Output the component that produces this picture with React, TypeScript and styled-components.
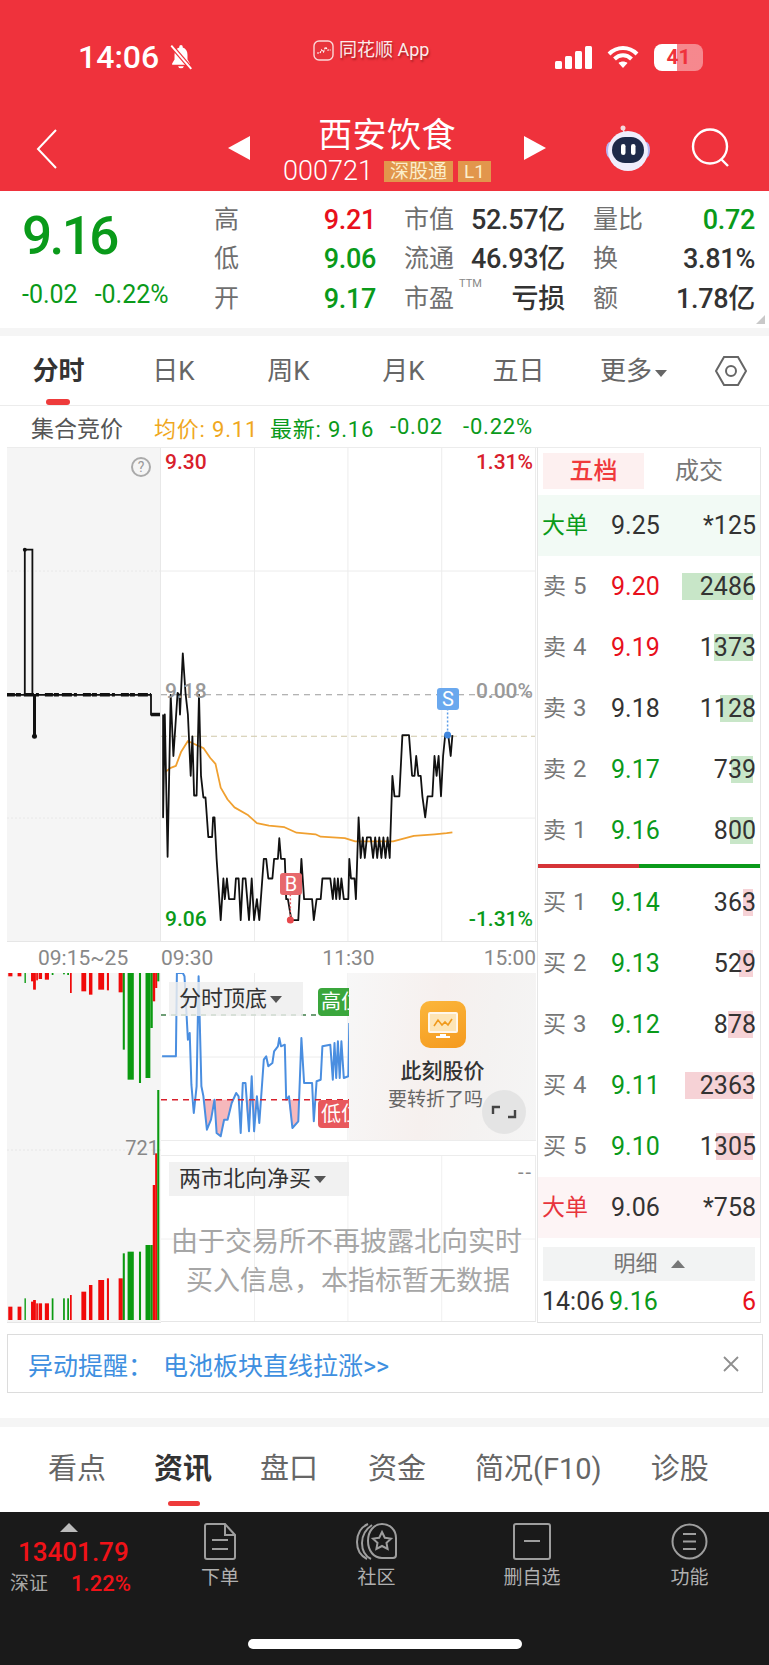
import React from "react";
import styled, { createGlobalStyle } from "styled-components";

const Global = createGlobalStyle`
  html, body { margin: 0; padding: 0; background: #fff; }
  body { font-family: Roboto, "Noto Sans CJK SC", sans-serif; width: 769px; }
  * { box-sizing: border-box; }
`;

const GREEN = "#0a9a1a";
const RED = "#e8101c";

const Page = styled.div`
  width: 769px;
  height: 1665px;
  overflow: hidden;
  display: flex;
  flex-direction: column;
  background: #fff;
`;

/* ---------- header ---------- */
const Header = styled.header`
  height: 191px;
  background: #ef323c;
  color: #fff;
  display: flex;
  flex-direction: column;
`;
const StatusBar = styled.div`
  height: 105px;
  position: relative;
  padding: 42px 66px 0 78px;
  display: flex;
  justify-content: space-between;
  align-items: flex-start;
`;
const TimeGroup = styled.div`
  display: flex;
  align-items: center;
  gap: 9px;
  height: 30px;
`;
const Clock = styled.span`
  font-family: Roboto, sans-serif;
  font-weight: 500;
  font-size: 32px;
  line-height: 30px;
`;
const AppTag = styled.div`
  position: absolute;
  left: 313px;
  top: 37px;
  display: flex;
  align-items: center;
  gap: 5px;
  font-size: 18px;
  line-height: 26px;
  color: rgba(255, 255, 255, 0.92);
  text-shadow: 1px 2px 2px rgba(120, 20, 20, 0.6);
`;
const StatusIcons = styled.div`
  display: flex;
  align-items: center;
  gap: 15px;
  height: 28px;
  margin-top: 1px;
`;
const Battery = styled.div`
  width: 49px;
  height: 27px;
  border-radius: 8px;
  background: linear-gradient(90deg, #fff 0 47%, rgba(255, 255, 255, 0.42) 47%);
  color: #ef323c;
  font-size: 21px;
  font-weight: 700;
  line-height: 27px;
  text-align: center;
`;
const Nav = styled.div`
  flex: 1;
  display: grid;
  grid-template-columns: 228px 22px 274px 22px 1fr;
  align-items: center;
`;
const BackCell = styled.div`
  padding: 2px 0 0 36px;
  display: flex;
  align-items: center;
`;
const TitleBlock = styled.div`
  display: flex;
  flex-direction: column;
  align-items: center;
`;
const Title = styled.div`
  font-size: 34px;
  line-height: 44px;
  letter-spacing: 0.4px;
`;
const CodeLine = styled.div`
  display: flex;
  align-items: center;
  gap: 5px;
  margin-top: 2px;
`;
const Code = styled.span`
  font-size: 27px;
  line-height: 24px;
  font-weight: 300;
  margin-right: 6px;
`;
const Tag = styled.span`
  height: 21px;
  padding: 0 6px;
  background: #e2964c;
  color: #fbeecb;
  font-size: 19px;
  line-height: 21px;
`;
const NavRight = styled.div`
  display: flex;
  align-items: center;
  padding-left: 58px;
  gap: 39px;
`;

/* ---------- quote ---------- */
const Quote = styled.section`
  position: relative;
  height: 137px;
  padding: 0 0 0 22px;
  display: flex;
`;
const PriceBlock = styled.div`
  width: 192px;
  display: flex;
  flex-direction: column;
`;
const BigPrice = styled.div`
  color: ${GREEN};
  font-size: 53px;
  font-weight: 500;
  line-height: 60px;
  letter-spacing: -2.6px;
  margin-top: 15px;
`;
const Change = styled.div`
  margin-top: 14px;
  display: flex;
  gap: 17px;
  color: ${GREEN};
  font-size: 25px;
  line-height: 30px;
`;
const QuoteGrid = styled.div`
  display: grid;
  grid-template-columns: 162px 161px 162px;
  column-gap: 28px;
  grid-auto-rows: 39.5px;
  padding-top: 9px;
`;
const Cell = styled.div`
  display: flex;
  justify-content: space-between;
  align-items: center;
  position: relative;
`;
const Label = styled.span`
  color: #6f6f6f;
  font-size: 25px;
  line-height: 30px;
`;
const Value = styled.span<{ $c?: string }>`
  color: ${(p) => p.$c || "#333"};
  font-size: 27px;
  font-weight: 500;
  line-height: 30px;
  letter-spacing: -0.3px;
`;
const Ttm = styled.sup`
  position: absolute;
  left: 55px;
  top: -1px;
  font-size: 11px;
  line-height: 12px;
  color: #888;
`;
const Corner = styled.div`
  position: absolute;
  right: 4px;
  bottom: 4px;
  width: 0;
  height: 0;
  border-left: 9px solid transparent;
  border-bottom: 9px solid #c9c9c9;
`;
const Band = styled.div<{ $h: number }>`
  height: ${(p) => p.$h}px;
  background: #f5f5f5;
  flex: none;
`;

/* ---------- period tabs ---------- */
const PeriodTabs = styled.nav`
  height: 70px;
  border-bottom: 1px solid #ececec;
  display: flex;
  padding-left: 1px;
  flex: none;
`;
const PeriodTab = styled.div<{ $on?: boolean }>`
  position: relative;
  width: 115px;
  text-align: center;
  line-height: 70px;
  font-size: 26px;
  font-weight: ${(p) => (p.$on ? 700 : 400)};
  color: ${(p) => (p.$on ? "#333" : "#666")};
  &::after {
    content: "";
    display: ${(p) => (p.$on ? "block" : "none")};
    position: absolute;
    left: 45px;
    bottom: 0;
    width: 24px;
    height: 6px;
    border-radius: 3px;
    background: #ee3b3b;
  }
`;
const Caret = styled.i<{ $c?: string; $s?: number }>`
  display: inline-block;
  width: 0;
  height: 0;
  border-left: ${(p) => p.$s || 6}px solid transparent;
  border-right: ${(p) => p.$s || 6}px solid transparent;
  border-top: ${(p) => (p.$s || 6) + 1}px solid ${(p) => p.$c || "#666"};
  margin-left: 3px;
  vertical-align: 3px;
`;
const HexWrap = styled.div`
  margin-left: 23px;
  display: flex;
  align-items: center;
`;

/* ---------- info line ---------- */
const InfoLine = styled.div`
  height: 41px;
  padding-left: 31px;
  display: flex;
  align-items: center;
  font-size: 22px;
  flex: none;
`;
const InfoTitle = styled.span`
  color: #555;
  font-size: 23px;
  width: 123px;
`;
const InfoText = styled.span<{ $c: string; $w: number }>`
  color: ${(p) => p.$c};
  width: ${(p) => p.$w}px;
  letter-spacing: 0.8px;
  white-space: nowrap;
`;

/* ---------- main ---------- */
const Main = styled.div`
  height: 876px;
  flex: none;
  padding-left: 7px;
  display: grid;
  grid-template-columns: 530px 224px;
`;
const LeftCol = styled.div`
  display: flex;
  flex-direction: column;
`;
const PricePanes = styled.div`
  height: 495px;
  display: grid;
  grid-template-columns: 154px 375px;
  border-top: 1px solid #ececec;
  border-bottom: 1px solid #e6e6e6;
`;
const GrayPane = styled.div`
  position: relative;
  background: #f5f5f5;
  border-right: 1px solid #e8e8e8;
`;
const WhitePane = styled.div`
  position: relative;
  background: #fff;
  border-right: 1px solid #ececec;
`;
const ChartSvg = styled.svg`
  display: block;
  position: absolute;
  left: 0;
  top: 0;
`;
const Help = styled.div`
  position: absolute;
  left: 124px;
  top: 9px;
  width: 20px;
  height: 20px;
  border: 2px solid #aaa;
  border-radius: 50%;
  color: #999;
  font-size: 14px;
  line-height: 16px;
  text-align: center;
`;
const AxisLabel = styled.span<{ $c: string; $top: number; $left?: number; $right?: number }>`
  position: absolute;
  top: ${(p) => p.$top}px;
  ${(p) => (p.$left !== undefined ? `left:${p.$left}px;` : "")}
  ${(p) => (p.$right !== undefined ? `right:${p.$right}px;` : "")}
  color: ${(p) => p.$c};
  font-size: 21px;
  font-weight: 500;
  line-height: 24px;
`;
const TimeAxis = styled.div`
  height: 31px;
  display: grid;
  grid-template-columns: 154px 1fr;
  align-items: center;
  color: #888;
  font-size: 21px;
`;
const AuctionTime = styled.span`
  padding-left: 31px;
`;
const SessionTimes = styled.div`
  display: flex;
  justify-content: space-between;
  padding-right: 1px;
`;
const LowerRow = styled.div`
  flex: 1;
  display: grid;
  grid-template-columns: 154px 375px;
`;
const VolPane = styled.div`
  position: relative;
  background: #f5f5f5;
  border-bottom: 1px solid #e6e6e6;
`;
const VolLabel = styled.span`
  position: absolute;
  right: 2px;
  top: 163px;
  color: #888;
  font-size: 20px;
  line-height: 24px;
`;
const IndicatorCol = styled.div`
  display: flex;
  flex-direction: column;
  gap: 14px;
`;
const IndicatorPane = styled.div`
  position: relative;
  height: 168px;
  border-bottom: 1px solid #ececec;
  overflow: hidden;
`;
const NorthPane = styled.div`
  position: relative;
  height: 167px;
  border-top: 1px solid #ececec;
  border-right: 1px solid #ececec;
  border-bottom: 1px solid #e6e6e6;
  overflow: hidden;
`;
const PickBox = styled.div<{ $top: number; $w: number }>`
  position: absolute;
  left: 8px;
  top: ${(p) => p.$top}px;
  width: ${(p) => p.$w}px;
  height: 34px;
  padding-left: 10px;
  background: rgba(238, 238, 238, 0.82);
  color: #333;
  font-size: 22px;
  line-height: 34px;
  white-space: nowrap;
`;
const LevelTag = styled.div<{ $bg: string; $top: number }>`
  position: absolute;
  left: 157px;
  top: ${(p) => p.$top}px;
  width: 31px;
  height: 28px;
  overflow: hidden;
  border-radius: 4px 0 0 4px;
  background: ${(p) => p.$bg};
  color: #fff;
  font-size: 20px;
  line-height: 28px;
  padding-left: 3px;
  white-space: nowrap;
`;
const Promo = styled.div`
  position: absolute;
  left: 188px;
  top: 0;
  right: 0;
  bottom: 0;
  background: linear-gradient(100deg, #f7f7f7 0%, #f6f0ee 45%, #f4f2f1 70%, #f5f5f5 100%);
  display: flex;
  flex-direction: column;
  align-items: center;
  padding-top: 28px;
`;
const PromoIcon = styled.div`
  width: 46px;
  height: 47px;
  border-radius: 10px;
  background: linear-gradient(160deg, #fbb63c, #f59a1e);
  display: flex;
  align-items: center;
  justify-content: center;
`;
const PromoTitle = styled.div`
  margin-top: 8px;
  color: #333;
  font-size: 21px;
  font-weight: 500;
  line-height: 30px;
`;
const PromoSub = styled.div`
  color: #666;
  font-size: 19px;
  line-height: 28px;
  margin-left: -14px;
`;
const Expand = styled.div`
  position: absolute;
  left: 133px;
  top: 117px;
  width: 44px;
  height: 44px;
  border-radius: 50%;
  background: rgba(226, 226, 226, 0.9);
`;
const Dashes = styled.span`
  position: absolute;
  right: 2px;
  top: 9px;
  color: #888;
  font-size: 20px;
  line-height: 14px;
  letter-spacing: 2px;
`;
const NorthMsg = styled.div`
  position: absolute;
  left: 0;
  right: 0;
  top: 67px;
  color: #a6a6a6;
  font-size: 27px;
  line-height: 39px;
  text-align: center;
`;
const NorthFirst = styled.div`
  white-space: nowrap;
  text-align: left;
  padding-left: 10px;
`;

/* ---------- order book ---------- */
const Book = styled.aside`
  border-top: 1px solid #ececec;
  border-left: 1px solid #e6e6e6;
  border-right: 1px solid #e6e6e6;
  border-bottom: 1px solid #e0e0e0;
  display: flex;
  flex-direction: column;
`;
const BookTabs = styled.div`
  height: 47px;
  padding: 5px 0 6px 5px;
  display: grid;
  grid-template-columns: 101px 1fr;
  font-size: 24px;
  line-height: 36px;
  text-align: center;
  flex: none;
`;
const BookTabOn = styled.div`
  background: #fdf0f0;
  color: #f03a3c;
  font-weight: 500;
`;
const BookTabOff = styled.div`
  color: #777;
  padding-right: 6px;
`;
const Row = styled.div<{ $bg?: string }>`
  position: relative;
  height: 61px;
  flex: none;
  background: ${(p) => p.$bg || "transparent"};
  display: grid;
  grid-template-columns: 69px 1fr auto;
  align-items: center;
  padding: 0 4px 0 4px;
  font-size: 25px;
  line-height: 30px;
`;
const SideLabel = styled.span<{ $c?: string }>`
  color: ${(p) => p.$c || "#777"};
  font-size: 23px;
  position: relative;
  white-space: nowrap;
  padding-left: ${(p) => (p.$c ? 0 : 1)}px;
`;
const Level = styled.span`
  color: #777;
  font-family: Roboto, sans-serif;
  font-size: 24px;
  margin-left: 7px;
`;
const Price = styled.span<{ $c?: string }>`
  color: ${(p) => p.$c || "#333"};
  position: relative;
`;
const Volume = styled.span`
  color: #333;
  position: relative;
`;
const DepthBar = styled.div<{ $c: string }>`
  position: absolute;
  right: 7px;
  top: 17px;
  height: 27px;
  background: ${(p) => p.$c};
`;
const Splitter = styled.div`
  height: 4px;
  margin: 3px 0 4px;
  flex: none;
  background: linear-gradient(90deg, #d63438 0 45.3%, #0a9a1a 45.3%);
`;
const DetailBar = styled.div`
  height: 34px;
  margin: 9px 5px 0;
  flex: none;
  background: #f2f3f3;
  color: #777;
  font-size: 22px;
  line-height: 34px;
  text-align: center;
`;
const UpCaret = styled.i`
  display: inline-block;
  width: 0;
  height: 0;
  margin-left: 13px;
  border-left: 7px solid transparent;
  border-right: 7px solid transparent;
  border-bottom: 8px solid #777;
  vertical-align: 3px;
`;
const TickRow = styled.div`
  flex: 1;
  display: grid;
  grid-template-columns: 67px 1fr auto;
  align-items: center;
  padding: 0 4px 0 4px;
  font-size: 25px;
`;

/* ---------- alert + news ---------- */
const Alert = styled.div`
  margin: 11px 6px 25px 7px;
  height: 59px;
  flex: none;
  border: 1px solid #dcdcdc;
  display: flex;
  align-items: center;
  justify-content: space-between;
  padding: 0 22px 0 20px;
  color: #3e8fe0;
  font-size: 25px;
`;
const AlertLead = styled.span`
  margin-right: 10px;
`;
const NewsTabs = styled.nav`
  height: 85px;
  flex: none;
  position: relative;
  display: flex;
  padding-left: 48px;
  font-size: 29px;
  line-height: 84px;
  color: #666;
  white-space: nowrap;
`;
const NewsTab = styled.div<{ $on?: boolean; $gap: number }>`
  position: relative;
  margin-right: ${(p) => p.$gap}px;
  font-weight: ${(p) => (p.$on ? 700 : 400)};
  color: ${(p) => (p.$on ? "#333" : "#666")};
  &::after {
    content: "";
    display: ${(p) => (p.$on ? "block" : "none")};
    position: absolute;
    left: 14px;
    bottom: 6px;
    width: 32px;
    height: 5px;
    border-radius: 3px;
    background: #ee3b3b;
  }
`;

/* ---------- bottom ---------- */
const Bottom = styled.footer`
  flex: 1;
  background: #1a1a1a;
  display: flex;
  flex-direction: column;
`;
const BottomBar = styled.div`
  height: 127px;
  display: grid;
  grid-template-columns: 141px 158px 155px 156px 1fr;
  flex: none;
`;
const IndexBox = styled.div`
  padding: 11px 0 0 10px;
  display: flex;
  flex-direction: column;
`;
const IndexArrow = styled.i`
  display: block;
  width: 0;
  height: 0;
  margin-left: 50px;
  border-left: 9px solid transparent;
  border-right: 9px solid transparent;
  border-bottom: 9px solid #bbb;
`;
const IndexValue = styled.div`
  color: #f01218;
  font-size: 26px;
  line-height: 32px;
  font-weight: 500;
  margin: 4px 0 0 8px;
`;
const IndexMeta = styled.div`
  display: flex;
  align-items: center;
  color: #a9a9a9;
  font-size: 19px;
  line-height: 30px;
  gap: 23px;
  margin-top: 1px;
`;
const IndexPct = styled.span`
  color: #f01218;
  font-size: 22px;
  font-weight: 500;
`;
const BarItem = styled.div`
  padding-top: 11px;
  display: flex;
  flex-direction: column;
  align-items: center;
  color: #b0b0b0;
  font-size: 19px;
  line-height: 26px;
  gap: 5px;
`;
const HomeIndicator = styled.div`
  width: 274px;
  height: 10px;
  margin: 0 0 0 248px;
  border-radius: 5px;
  background: #fff;
`;

/* ---------- chart data: coordinates measured on the reference ---------- */
type P = [number, number];
const trendX = (x: number) => x / 2.9 - 161;
const trendY = (y: number) => 340 + y / 2.53 - 447;
const trend = (l: P[]) => l.map(([x, y]) => `${trendX(x).toFixed(1)},${trendY(y).toFixed(1)}`).join(" ");
const auctionX = (x: number) => x / 2.9 - 7;
const auction = (l: P[]) => l.map(([x, y]) => `${auctionX(x).toFixed(1)},${trendY(y).toFixed(1)}`).join(" ");
const indX = (x: number) => x / 2.9 - 161;
const indY = (y: number) => (y - 100) / 3;
const ind = (l: P[]) => l.map(([x, y]) => `${indX(x).toFixed(1)},${indY(y).toFixed(1)}`).join(" ");

const priceLine: P[] = [[473,945],[473,1205],[478,945],[486,1305],[495,895],[503,1050],[515,890],[520,895],[522,945],[530,790],[538,890],[545,945],[553,1100],[558,1000],[563,1150],[570,1150],[577,895],[583,1100],[590,1155],[596,1155],[604,1255],[615,1255],[618,1205],[622,1205],[628,1310],[640,1465],[648,1360],[652,1412],[658,1360],[664,1412],[680,1412],[684,1360],[692,1360],[698,1465],[704,1360],[712,1360],[722,1465],[730,1360],[737,1465],[745,1412],[752,1465],[765,1310],[772,1310],[778,1360],[790,1360],[795,1310],[806,1310],[810,1258],[815,1310],[826,1310],[830,1412],[835,1412],[845,1465],[865,1465],[874,1310],[882,1412],[905,1412],[910,1465],[918,1412],[930,1412],[935,1360],[958,1360],[965,1412],[970,1360],[975,1412],[980,1360],[985,1412],[990,1360],[997,1412],[1010,1412],[1013,1310],[1018,1360],[1028,1360],[1032,1412],[1040,1205],[1046,1308],[1052,1256],[1058,1308],[1064,1256],[1075,1256],[1082,1308],[1088,1256],[1094,1308],[1100,1256],[1106,1308],[1112,1256],[1118,1308],[1124,1256],[1130,1308],[1138,1100],[1144,1152],[1158,1152],[1167,997],[1186,997],[1195,1100],[1202,1100],[1207,1050],[1213,1100],[1220,1100],[1225,1152],[1233,1205],[1240,1152],[1254,1152],[1260,1050],[1266,1100],[1272,1050],[1279,1152],[1285,1050],[1291,997],[1300,997],[1307,1050],[1312,997]];
const avgLine: P[] = [[480,1090],[495,1080],[510,1075],[525,1040],[545,1012],[565,1020],[590,1030],[610,1055],[625,1070],[640,1130],[660,1160],[680,1180],[720,1200],[745,1220],[780,1226],[825,1230],[860,1244],[915,1248],[930,1254],[1000,1258],[1030,1266],[1080,1266],[1140,1266],[1200,1252],[1260,1248],[1295,1245],[1312,1243]];
const auctionLine: P[] = [[20,895],[72,895],[72,528],[94,528],[94,895],[100,895],[100,1000],[100,895],[438,895],[438,945],[465,945]];
const indLine: P[] = [[470,350],[510,350],[513,100],[530,100],[535,110],[545,300],[550,280],[555,435],[562,520],[570,440],[576,110],[584,440],[590,470],[600,570],[612,540],[622,480],[628,580],[640,590],[650,540],[660,540],[672,490],[685,460],[692,470],[698,580],[704,430],[712,430],[722,575],[730,410],[737,575],[745,470],[752,550],[765,360],[772,350],[778,380],[790,370],[795,335],[806,320],[810,295],[815,320],[826,315],[830,480],[838,470],[848,565],[865,545],[874,295],[882,430],[905,430],[910,545],[918,425],[930,420],[935,320],[958,315],[965,420],[970,310],[975,415],[980,305],[985,415],[990,305],[997,415],[1010,410],[1013,250]];
const pinkAreas: P[][] = [
  [[590,480],[600,570],[612,540],[622,480]],
  [[622,480],[628,580],[640,590],[650,540],[660,540],[672,490],[678,480]],
  [[712,480],[722,575],[730,480]],
  [[737,480],[737,575],[745,480]],
  [[836,480],[848,565],[865,545],[868,480]],
];
const volG = "#0a9a10";
const volR = "#f00a0a";
const volBars: [number, number, string, number, number][] = [
  [24,36,volR,10,40],[51,62,volR,10,40],[71,75,volG,30,65],[90,98,volR,25,55],[96,104,volR,50,60],[105,110,volR,22,50],[112,122,volR,18,50],[130,142,volR,20,50],
  [150,155,volG,6,65],[183,188,volG,4,65],[195,200,volG,6,65],[203,208,volR,60,75],[236,250,volR,55,85],[258,268,volR,65,105],[285,302,volR,50,120],[310,316,volR,52,125],
  [344,356,volR,58,125],[356,362,volG,230,200],[370,388,volG,320,205],[403,409,volG,330,205],[422,436,volG,315,225],[436,443,volG,165,225],[443,450,volR,85,405],[450,456,volR,45,500],[456,462,volG,25,690],
];

const book = {
  sell: [
    { l: 5, p: "9.20", c: RED, v: "2486", w: 71 },
    { l: 4, p: "9.19", c: RED, v: "1373", w: 39 },
    { l: 3, p: "9.18", c: "#333", v: "1128", w: 33 },
    { l: 2, p: "9.17", c: GREEN, v: "739", w: 22 },
    { l: 1, p: "9.16", c: GREEN, v: "800", w: 23 },
  ],
  buy: [
    { l: 1, p: "9.14", c: GREEN, v: "363", w: 10 },
    { l: 2, p: "9.13", c: GREEN, v: "529", w: 14 },
    { l: 3, p: "9.12", c: GREEN, v: "878", w: 25 },
    { l: 4, p: "9.11", c: GREEN, v: "2363", w: 68 },
    { l: 5, p: "9.10", c: GREEN, v: "1305", w: 37 },
  ],
};

const Chevron = () => (
  <svg width="22" height="40" viewBox="0 0 22 40" fill="none" stroke="#fff" strokeWidth="2">
    <path d="M20 1 2 20l18 19" />
  </svg>
);
const NavArrow = ({ flip }: { flip?: boolean }) => (
  <svg width="22" height="24" viewBox="0 0 22 24" fill="#fff">
    <path d={flip ? "M0 0 22 12 0 24z" : "M22 0 0 12l22 12z"} />
  </svg>
);
const BellSlash = () => (
  <svg width="26" height="27" viewBox="0 0 24 25" fill="#fff">
    <path d="M12 1a1.6 1.6 0 0 0-1.6 1.6v.7C7.5 4.1 6 6.8 6 10v4.3L3.8 18v1.3h16.4V18L18 14.3V10c0-3.2-1.5-5.9-4.400-6.700v-.7A1.600 1.600 0 0 0 12 1zM9.300 20.500a2.800 2.800 0 0 0 5.400 0z" />
    <path d="M3 1.500 21.500 23" stroke="#ef323c" strokeWidth="4" />
    <path d="M3 1.500 21.500 23" stroke="#fff" strokeWidth="1.800" />
  </svg>
);
const LogoMark = () => (
  <svg width="21" height="21" viewBox="0 0 21 21">
    <rect x="1" y="1" width="19" height="19" rx="5" fill="#e8343c" stroke="#fbd8d8" strokeWidth="1.400" />
    <path d="M4 13h3l1.500-3 2 2 2-5 2 3H18" fill="none" stroke="#fff" strokeWidth="1.200" strokeDasharray="2 1" />
  </svg>
);
const Signal = () => (
  <svg width="37" height="23" viewBox="0 0 37 23" fill="#fff">
    <rect x="0" y="15" width="7" height="8" rx="1.500" />
    <rect x="10" y="10" width="7" height="13" rx="1.500" />
    <rect x="20" y="5" width="7" height="18" rx="1.500" />
    <rect x="30" y="0" width="7" height="23" rx="1.500" />
  </svg>
);
const Wifi = () => (
  <svg width="32" height="24" viewBox="0 0 32 24" fill="none" stroke="#fff" strokeWidth="4">
    <path d="M2 9c8-8 20-8 28 0" />
    <path d="M7.500 14c5-5 12-5 17 0" />
    <path d="M16 23l-4.500-5c2.500-2 6.500-2 9 0z" fill="#fff" stroke="none" />
  </svg>
);
const Robot = () => (
  <svg width="48" height="48" viewBox="0 0 48 48">
    <circle cx="19" cy="4" r="2.500" fill="#f4d9dc" />
    <path d="M19 5l2 6" stroke="#f4d9dc" strokeWidth="1.500" />
    <ellipse cx="6" cy="26" rx="4" ry="8" fill="#b6b3f2" />
    <ellipse cx="42" cy="26" rx="4" ry="8" fill="#b6b3f2" />
    <ellipse cx="24" cy="27" rx="20" ry="20" fill="#f0eefc" />
    <rect x="8" y="13" width="32" height="26" rx="13" fill="#1e2a49" />
    <rect x="17" y="20" width="4.500" height="11" rx="2.250" fill="#fff" />
    <rect x="27" y="20" width="4.500" height="11" rx="2.250" fill="#fff" />
  </svg>
);
const Search = () => (
  <svg width="40" height="40" viewBox="0 0 40 40" fill="none" stroke="#fff" strokeWidth="2.400">
    <circle cx="19" cy="18.500" r="17" />
    <path d="M30 31l7 7" />
  </svg>
);
const Hex = () => (
  <svg width="34" height="34" viewBox="0 0 34 34" fill="none" stroke="#666" strokeWidth="2">
    <path d="M10 3h14l8 14-8 14H10L2 17z" />
    <circle cx="17" cy="17" r="5" />
  </svg>
);
const Close = () => (
  <svg width="18" height="18" viewBox="0 0 18 18" stroke="#8f8f8f" strokeWidth="1.800">
    <path d="M2 2l14 14M16 2 2 16" />
  </svg>
);
const DocIcon = () => (
  <svg width="36" height="37" viewBox="0 0 36 37" fill="none" stroke="#9e9e9e" strokeWidth="2">
    <path d="M3 3a2 2 0 0 1 2-2h18l10 11v22a2 2 0 0 1-2 2H5a2 2 0 0 1-2-2z" />
    <path d="M23 1v11h10M10 17h16M10 26h16" />
  </svg>
);
const CommunityIcon = () => (
  <svg width="42" height="37" viewBox="0 0 42 37" fill="none" stroke="#9e9e9e" strokeWidth="2">
    <path d="M12 1C5 4 1 11 1 19s4 14 10 17" />
    <path d="M16 2C10 6 6 12 6 20s3 13 9 16" />
    <path d="M26 1c8 0 14 6 14 14v17a3 3 0 0 1-3 3H26c-8 0-14-7-14-17S18 1 26 1z" />
    <path d="M26 9l2.800 5.800 6.200.8-4.500 4.300 1.100 6.100-5.600-3-5.600 3 1.100-6.100-4.500-4.300 6.200-.8z" />
  </svg>
);
const MinusBox = () => (
  <svg width="38" height="37" viewBox="0 0 38 37" fill="none" stroke="#9e9e9e" strokeWidth="2">
    <rect x="1" y="1" width="36" height="35" rx="2" />
    <path d="M11 18h16" />
  </svg>
);
const MenuCircle = () => (
  <svg width="37" height="37" viewBox="0 0 37 37" fill="none" stroke="#9e9e9e" strokeWidth="2">
    <circle cx="18.500" cy="18.500" r="17" />
    <path d="M12 11h13M12 18.500h13M12 26h13" />
  </svg>
);
const PromoGlyph = () => (
  <svg width="32" height="30" viewBox="0 0 32 30">
    <rect x="1" y="2" width="30" height="21" rx="2" fill="#fff" opacity="0.9" />
    <rect x="3" y="4" width="26" height="17" fill="#fde5b6" />
    <path d="M7 16l4-6 4 5 3-3 3 3 4-6" fill="none" stroke="#f09a1c" strokeWidth="1.600" />
    <path d="M13 24h6v2h4v2H9v-2h4z" fill="#fff" />
  </svg>
);
const ExpandGlyph = () => (
  <svg width="44" height="44" viewBox="0 0 44 44" fill="none" stroke="#444" strokeWidth="2.400">
    <path d="M11 24v-7h7M33 20v7h-7" />
  </svg>
);

const TrendPane = () => {
  const gy = [trendY(582), trendY(1207)];
  const gx = [trendX(738), trendX(1009), trendX(1281)];
  const sx = trendX(1298);
  const bx = trendX(842);
  return (
    <ChartSvg width="374" height="493" viewBox="0 0 374 493">
      {gy.map((y) => (
        <line key={y} x1="0" x2="374" y1={y} y2={y} stroke="#ececec" />
      ))}
      {gx.map((x) => (
        <line key={x} x1={x} x2={x} y1="0" y2="493" stroke="#ececec" />
      ))}
      <line x1="0" x2="374" y1={trendY(895)} y2={trendY(895)} stroke="#9a9a9a" strokeWidth="1.200" strokeDasharray="6 5" />
      <line x1="0" x2="374" y1={trendY(1000)} y2={trendY(1000)} stroke="#cfc7a8" strokeDasharray="6 4" />
      <polyline points={trend(avgLine)} fill="none" stroke="#f0a030" strokeWidth="1.800" strokeLinejoin="round" />
      <polyline points={trend(priceLine)} fill="none" stroke="#111" strokeWidth="1.800" strokeLinejoin="round" />
      <line x1={sx} x2={sx} y1={trendY(930)} y2={trendY(997)} stroke="#5b9ce8" strokeWidth="1.500" strokeDasharray="2 2" />
      <circle cx={sx} cy={trendY(997)} r="3.500" fill="#3f86de" />
      <line x1={bx} x2={bx} y1={trendY(1400)} y2={trendY(1465)} stroke="#e75c60" strokeWidth="1.500" strokeDasharray="2 2" />
      <circle cx={bx} cy={trendY(1465)} r="3.500" fill="#e8484c" />
    </ChartSvg>
  );
};

const Marker = styled.div<{ $bg: string; $left: number; $top: number }>`
  position: absolute;
  left: ${(p) => p.$left}px;
  top: ${(p) => p.$top}px;
  width: 22px;
  height: 22px;
  border-radius: 3px;
  background: ${(p) => p.$bg};
  color: #fff;
  font-size: 20px;
  line-height: 22px;
  text-align: center;
`;

export default function App() {
  return (
    <Page>
      <Global />
      <Header>
        <StatusBar>
          <TimeGroup>
            <Clock>14:06</Clock>
            <BellSlash />
          </TimeGroup>
          <AppTag>
            <LogoMark />
            <span>同花顺 App</span>
          </AppTag>
          <StatusIcons>
            <Signal />
            <Wifi />
            <Battery>41</Battery>
          </StatusIcons>
        </StatusBar>
        <Nav>
          <BackCell>
            <Chevron />
          </BackCell>
          <NavArrow />
          <TitleBlock>
            <Title>西安饮食</Title>
            <CodeLine>
              <Code>000721</Code>
              <Tag>深股通</Tag>
              <Tag>L1</Tag>
            </CodeLine>
          </TitleBlock>
          <NavArrow flip />
          <NavRight>
            <Robot />
            <Search />
          </NavRight>
        </Nav>
      </Header>

      <Quote>
        <PriceBlock>
          <BigPrice>9.16</BigPrice>
          <Change>
            <span>-0.02</span>
            <span>-0.22%</span>
          </Change>
        </PriceBlock>
        <QuoteGrid>
          <Cell><Label>高</Label><Value $c={RED}>9.21</Value></Cell>
          <Cell><Label>市值</Label><Value>52.57亿</Value></Cell>
          <Cell><Label>量比</Label><Value $c={GREEN}>0.72</Value></Cell>
          <Cell><Label>低</Label><Value $c={GREEN}>9.06</Value></Cell>
          <Cell><Label>流通</Label><Value>46.93亿</Value></Cell>
          <Cell><Label>换</Label><Value>3.81%</Value></Cell>
          <Cell><Label>开</Label><Value $c={GREEN}>9.17</Value></Cell>
          <Cell><Label>市盈</Label><Ttm>TTM</Ttm><Value>亏损</Value></Cell>
          <Cell><Label>额</Label><Value>1.78亿</Value></Cell>
        </QuoteGrid>
        <Corner />
      </Quote>
      <Band $h={8} />

      <PeriodTabs>
        <PeriodTab $on>分时</PeriodTab>
        <PeriodTab>日K</PeriodTab>
        <PeriodTab>周K</PeriodTab>
        <PeriodTab>月K</PeriodTab>
        <PeriodTab>五日</PeriodTab>
        <PeriodTab>更多<Caret /></PeriodTab>
        <HexWrap><Hex /></HexWrap>
      </PeriodTabs>

      <InfoLine>
        <InfoTitle>集合竞价</InfoTitle>
        <InfoText $c="#f0a81e" $w={116}>均价: 9.11</InfoText>
        <InfoText $c={GREEN} $w={120}>最新: 9.16</InfoText>
        <InfoText $c={GREEN} $w={73}>-0.02</InfoText>
        <InfoText $c={GREEN} $w={90}>-0.22%</InfoText>
      </InfoLine>

      <Main>
        <LeftCol>
          <PricePanes>
            <GrayPane>
              <ChartSvg width="153" height="493" viewBox="0 0 153 493">
                <line x1="0" x2="153" y1={trendY(582)} y2={trendY(582)} stroke="#e8e8e8" strokeDasharray="2 2" />
                <line x1="0" x2="153" y1={trendY(1207)} y2={trendY(1207)} stroke="#e8e8e8" strokeDasharray="2 2" />
                <polyline points={auction(auctionLine)} fill="none" stroke="#111" strokeWidth="1.800" />
                <line x1={auctionX(20)} x2={auctionX(438)} y1={trendY(895)} y2={trendY(895)} stroke="#111" strokeWidth="3.500" strokeDasharray="8 1 5 3 10 2 3 6" />
                <line x1={auctionX(438)} x2={auctionX(465)} y1={trendY(945)} y2={trendY(945)} stroke="#111" strokeWidth="3.500" />
                <line x1={auctionX(100)} x2={auctionX(100)} y1={trendY(895)} y2={trendY(1000)} stroke="#111" strokeWidth="3" />
                <circle cx={auctionX(72)} cy={trendY(528)} r="2" fill="#111" />
                <circle cx={auctionX(100)} cy={trendY(1000)} r="2.500" fill="#111" />
              </ChartSvg>
              <Help>?</Help>
            </GrayPane>
            <WhitePane>
              <TrendPane />
              <AxisLabel $c="#d8202c" $top={2} $left={4}>9.30</AxisLabel>
              <AxisLabel $c="#d8202c" $top={2} $right={2}>1.31%</AxisLabel>
              <AxisLabel $c="#999" $top={231} $left={4}>9.18</AxisLabel>
              <AxisLabel $c="#999" $top={231} $right={2}>0.00%</AxisLabel>
              <AxisLabel $c={GREEN} $top={459} $left={4}>9.06</AxisLabel>
              <AxisLabel $c={GREEN} $top={459} $right={2}>-1.31%</AxisLabel>
              <Marker $bg="#6aa8ee" $left={276} $top={240}>S</Marker>
              <Marker $bg="#e7686c" $left={119} $top={425}>B</Marker>
            </WhitePane>
          </PricePanes>
          <TimeAxis>
            <AuctionTime>09:15~25</AuctionTime>
            <SessionTimes>
              <span>09:30</span>
              <span>11:30</span>
              <span>15:00</span>
            </SessionTimes>
          </TimeAxis>
          <LowerRow>
            <VolPane>
              <ChartSvg width="154" height="348" viewBox="0 0 154 348">
                <line x1="0" x2="154" y1="177" y2="177" stroke="#e6e6e6" strokeDasharray="2 2" />
                {volBars.map(([a, b, c, t, h], i) => {
                  const x = a / 2.9 - 7;
                  const w = (b - a) / 2.9;
                  return (
                    <g key={i} fill={c}>
                      <rect x={x} y="0" width={w} height={t / 3} />
                      <rect x={x} y={347 - h / 3} width={w} height={h / 3} />
                    </g>
                  );
                })}
              </ChartSvg>
              <VolLabel>721</VolLabel>
            </VolPane>
            <IndicatorCol>
              <IndicatorPane>
                <ChartSvg width="375" height="168" viewBox="0 0 375 168">
                  {[trendX(738), trendX(1009)].map((x) => (
                    <line key={x} x1={x} x2={x} y1="0" y2="168" stroke="#ececec" />
                  ))}
                  <line x1="0" x2="188" y1="84" y2="84" stroke="#ececec" />
                  {pinkAreas.map((a, i) => (
                    <polygon key={i} points={ind(a)} fill="#f6b8bc" />
                  ))}
                  <polyline points={ind(indLine)} fill="none" stroke="#4a8ee0" strokeWidth="2" strokeLinejoin="round" />
                  <line x1="0" x2="188" y1={indY(226)} y2={indY(226)} stroke="#3f7f4a" strokeWidth="1.500" strokeDasharray="5 5" />
                  <line x1="0" x2="188" y1={indY(480)} y2={indY(480)} stroke="#d8202c" strokeWidth="1.500" strokeDasharray="6 5" />
                </ChartSvg>
                <PickBox $top={9} $w={134}>分时顶底<Caret $c="#555" $s={6} /></PickBox>
                <LevelTag $bg="#3aa63c" $top={15}>高位</LevelTag>
                <LevelTag $bg="#e8585c" $top={127}>低位</LevelTag>
                <Promo>
                  <PromoIcon><PromoGlyph /></PromoIcon>
                  <PromoTitle>此刻股价</PromoTitle>
                  <PromoSub>要转折了吗</PromoSub>
                  <Expand><ExpandGlyph /></Expand>
                </Promo>
              </IndicatorPane>
              <NorthPane>
                <ChartSvg width="374" height="165" viewBox="0 0 374 165">
                  {[trendX(738), trendX(1009), trendX(1281)].map((x) => (
                    <line key={x} x1={x} x2={x} y1="0" y2="165" stroke="#f0f0f0" />
                  ))}
                  <line x1="0" x2="374" y1="83" y2="83" stroke="#f0f0f0" />
                </ChartSvg>
                <PickBox $top={6} $w={180}>两市北向净买<Caret $c="#555" $s={6} /></PickBox>
                <Dashes>--</Dashes>
                <NorthMsg>
                  <NorthFirst>由于交易所不再披露北向实时</NorthFirst>
                  <div>买入信息，本指标暂无数据</div>
                </NorthMsg>
              </NorthPane>
            </IndicatorCol>
          </LowerRow>
        </LeftCol>

        <Book>
          <BookTabs>
            <BookTabOn>五档</BookTabOn>
            <BookTabOff>成交</BookTabOff>
          </BookTabs>
          <Row $bg="#f2faf5">
            <SideLabel $c={GREEN}>大单</SideLabel>
            <Price>9.25</Price>
            <Volume>*125</Volume>
          </Row>
          {book.sell.map((r) => (
            <Row key={r.l}>
              <DepthBar $c="#c8e6c8" style={{ width: r.w }} />
              <SideLabel>卖<Level>{r.l}</Level></SideLabel>
              <Price $c={r.c}>{r.p}</Price>
              <Volume>{r.v}</Volume>
            </Row>
          ))}
          <Splitter />
          {book.buy.map((r) => (
            <Row key={r.l}>
              <DepthBar $c="#f6d2d6" style={{ width: r.w }} />
              <SideLabel>买<Level>{r.l}</Level></SideLabel>
              <Price $c={r.c}>{r.p}</Price>
              <Volume>{r.v}</Volume>
            </Row>
          ))}
          <Row $bg="#fdf4f5">
            <SideLabel $c="#e8343c">大单</SideLabel>
            <Price>9.06</Price>
            <Volume>*758</Volume>
          </Row>
          <DetailBar>明细<UpCaret /></DetailBar>
          <TickRow>
            <span style={{ color: "#333" }}>14:06</span>
            <Price $c={GREEN}>9.16</Price>
            <Volume style={{ color: RED }}>6</Volume>
          </TickRow>
        </Book>
      </Main>

      <Alert>
        <span>
          <AlertLead>异动提醒：</AlertLead>电池板块直线拉涨&gt;&gt;
        </span>
        <Close />
      </Alert>
      <Band $h={9} />
      <NewsTabs>
        <NewsTab $gap={48}>看点</NewsTab>
        <NewsTab $gap={48} $on>资讯</NewsTab>
        <NewsTab $gap={50}>盘口</NewsTab>
        <NewsTab $gap={49}>资金</NewsTab>
        <NewsTab $gap={49}>简况(F10)</NewsTab>
        <NewsTab $gap={0}>诊股</NewsTab>
      </NewsTabs>

      <Bottom>
        <BottomBar>
          <IndexBox>
            <IndexArrow />
            <IndexValue>13401.79</IndexValue>
            <IndexMeta>
              <span>深证</span>
              <IndexPct>1.22%</IndexPct>
            </IndexMeta>
          </IndexBox>
          <BarItem><DocIcon /><span>下单</span></BarItem>
          <BarItem><CommunityIcon /><span>社区</span></BarItem>
          <BarItem><MinusBox /><span>删自选</span></BarItem>
          <BarItem><MenuCircle /><span>功能</span></BarItem>
        </BottomBar>
        <HomeIndicator />
      </Bottom>
    </Page>
  );
}
